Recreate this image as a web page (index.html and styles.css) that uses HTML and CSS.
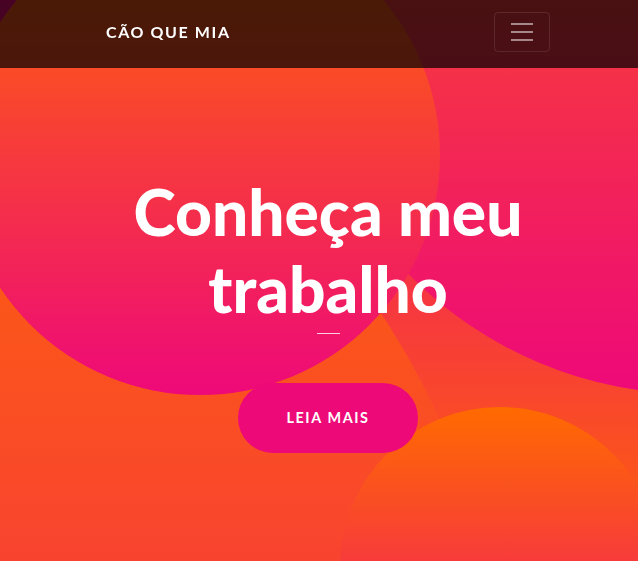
FILE: index.html
```html
<!DOCTYPE html>
<html lang="pt">
<head>
<meta charset="utf-8">
<title>Cão que mia</title>
<link rel="stylesheet" href="styles.css">
</head>
<body>
<nav class="navbar">
  <div class="container nav-inner">
    <a class="brand" href="#">Cão que mia</a>
    <button class="toggler" type="button" aria-label="Menu">
      <svg class="toggler-icon" viewBox="0 0 30 30" width="30" height="30">
        <path d="M4 7h22M4 15h22M4 23h22" stroke="rgba(255,255,255,0.5)" stroke-width="2" stroke-linecap="butt" fill="none"/>
      </svg>
    </button>
  </div>
</nav>
<header class="masthead">
  <div class="bg-circle circle-1"></div>
  <div class="bg-circle circle-2"></div>
  <div class="bg-circle circle-3"></div>
  <div class="bg-circle circle-4"></div>
  <div class="container masthead-content">
    <h1 class="masthead-heading">Conheça meu trabalho</h1>
    <div class="divider"></div>
    <a class="btn-xl" href="#">Leia mais</a>
  </div>
</header>
</body>
</html>
```
FILE: styles.css
```css
html, body {
  margin: 0;
  padding: 0;
  height: 100%;
  overflow: hidden;
}
body {
  font-family: Lato, "Liberation Sans", sans-serif;
  color: #fff;
}
.container {
  max-width: 444px;
  margin: 0 auto;
  padding-left: 18px;
}
.navbar {
  position: fixed;
  top: 0;
  left: 0;
  right: 0;
  z-index: 10;
  background-color: rgba(0, 0, 0, 0.7);
  padding: 12px 0 16px;
}
.nav-inner {
  display: flex;
  align-items: center;
  justify-content: space-between;
}
.brand {
  color: #fff;
  text-decoration: none;
  text-transform: uppercase;
  font-weight: 700;
  font-size: 16px;
  letter-spacing: 1.6px;
  line-height: 24px;
}
.toggler {
  display: flex;
  padding: 4px 12px;
  background: transparent;
  border: 1px solid rgba(255, 255, 255, 0.1);
  border-radius: 4px;
  margin: 0;
}
.toggler-icon {
  display: block;
}
.masthead {
  position: relative;
  overflow: hidden;
  height: 561px;
  background: linear-gradient(180deg, #ee0979 0px, #ff6a00 625px);
}
.bg-circle {
  position: absolute;
  border-radius: 50%;
  background: linear-gradient(0deg, #ee0979 0%, #ff6a00 100%);
}
.circle-1 { width: 1440px; height: 1440px; left: -938px; top: -7px; }
.circle-2 { width: 800px; height: 800px; left: 294px; top: -406px; }
.circle-3 { width: 320px; height: 320px; left: 340px; top: 407px; }
.circle-4 { width: 480px; height: 480px; left: -40px; top: -85px; }
.masthead-content {
  position: relative;
  z-index: 1;
  padding-top: 174px;
  display: flex;
  flex-direction: column;
  align-items: center;
  text-align: center;
}
.masthead-heading {
  margin: 0;
  font-family: Lato, "Liberation Sans", sans-serif;
  font-weight: 900;
  font-size: 64px;
  line-height: 1.2;
  color: #fff;
}
.divider {
  width: 23px;
  height: 1px;
  margin-top: 5px;
  background: rgba(255, 255, 255, 0.8);
}
.btn-xl {
  margin-top: 49px;
  display: inline-block;
  padding: 24px 48px;
  background: #ee0979;
  color: #fff;
  text-decoration: none;
  text-transform: uppercase;
  font-weight: 700;
  font-size: 14.4px;
  letter-spacing: 1.6px;
  line-height: 22px;
  border-radius: 160px;
}
```
